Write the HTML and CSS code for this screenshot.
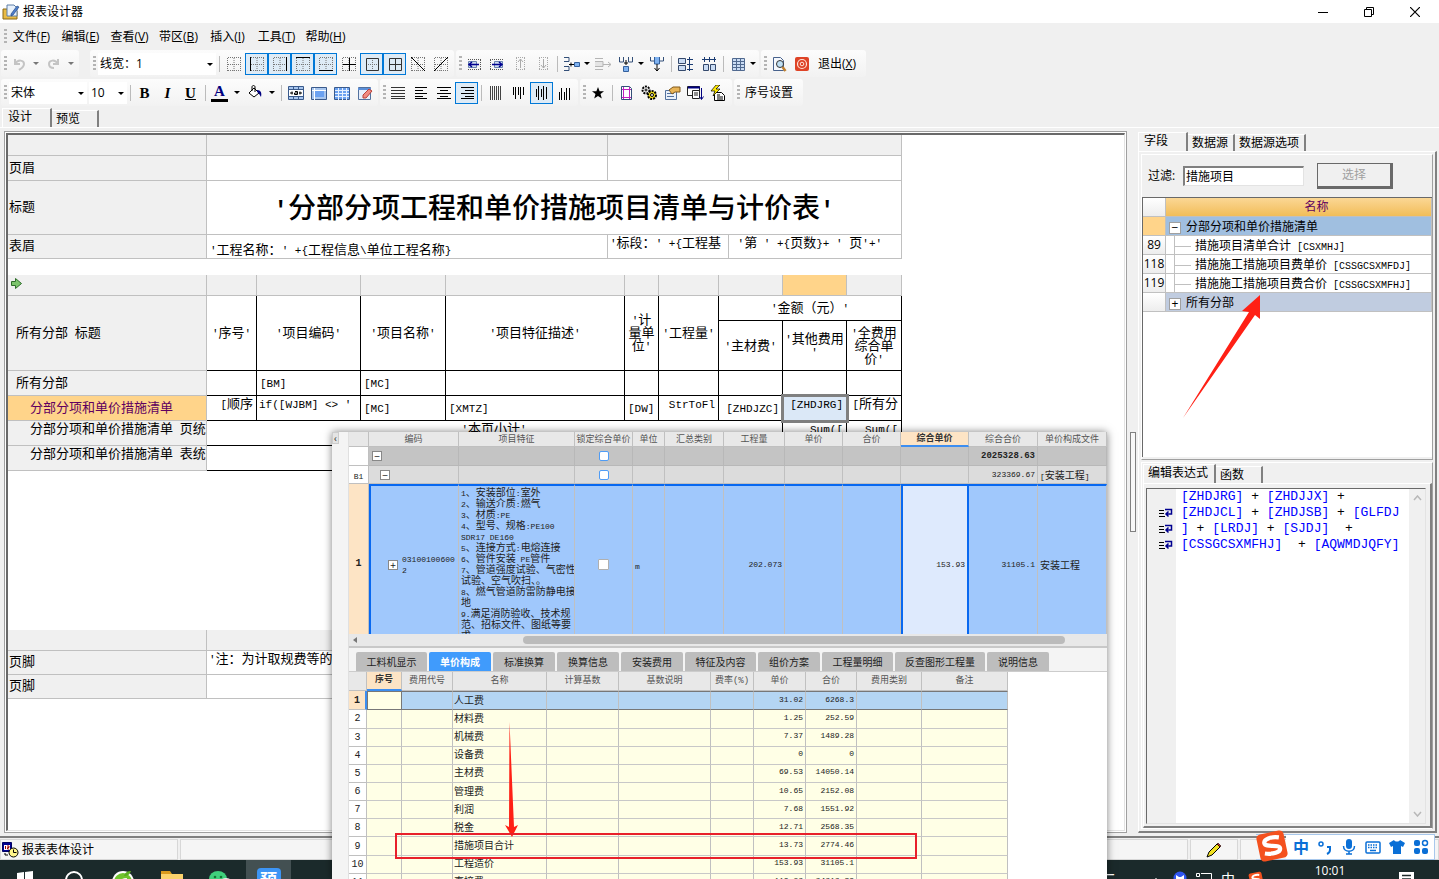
FILE: index.html
```html
<!DOCTYPE html>
<html lang="zh-CN">
<head>
    <meta charset="UTF-8">
    <meta name="viewport" content="width=device-width, initial-scale=1.0">
    <title>报表设计器</title>
    <link rel="stylesheet" href="styles.css">
</head>
<body>

<svg class="defs" width="0" height="0">
    <defs>
        <symbol id="dots" viewBox="0 0 16 16"><path d="M1.5 2v13M14.5 2v13M8 2v13M2 1.5h13M2 14.5h13M2 8.5h13" stroke="#777" stroke-dasharray="1 1" fill="none"/></symbol>
        <symbol id="wrap" viewBox="0 0 14 10"><path d="M0 2.500h5M0 5.500h5M0 8.500h6" stroke="#000"/><path d="M6 1.500h6.500v4.500h-5M9.500 3.500L7 6l2.500 2.500" stroke="#000090" stroke-width="1.500" fill="none"/></symbol>
        <symbol id="sogou" viewBox="0 0 32 32"><g transform="rotate(-12 16 16)"><rect x="3" y="3" width="26" height="26" rx="4" fill="#f4511e"/><path d="M24 9.500C17 7 9.500 8 9.500 12c0 4.500 13.500 3.500 13.500 7.500 0 4-8 4.500-15 2" stroke="#fff" stroke-width="4" fill="none"/></g></symbol>
    </defs>
</svg>

<div class="titlebar">
    <svg width="18" height="16" viewBox="0 0 18 16"><path d="M1 5h4l1 2h9v8H1z" fill="#e9bb45" stroke="#8a6914"/><path d="M5 1h7l3 3v8H5z" fill="#e8f1fb" stroke="#5c7ea8"/><path d="M9 10l6-8 2 1-6 8-2 1z" fill="#4d7fd0" stroke="#27497f" stroke-width=".7"/></svg>
    <span class="title">报表设计器</span>
    <button class="win" aria-label="最小化"><svg width="10" height="10"><path d="M0 5.500h10" stroke="#000"/></svg></button>
    <button class="win" aria-label="还原"><svg width="10" height="10"><path d="M.5 2.500h7v7h-7zM2.500 2.500v-2h7v7h-2" stroke="#000" fill="none"/></svg></button>
    <button class="win" aria-label="关闭"><svg width="10" height="10"><path d="M0 0l10 10M10 0L0 10" stroke="#000" stroke-width="1.200"/></svg></button>
</div>

<nav class="menubar">
    <span class="grip"></span>
    <button>文件(<u>F</u>)</button>
    <button>编辑(<u>E</u>)</button>
    <button>查看(<u>V</u>)</button>
    <button>带区(<u>B</u>)</button>
    <button>插入(<u>I</u>)</button>
    <button>工具(<u>T</u>)</button>
    <button>帮助(<u>H</u>)</button>
</nav>

<div class="toolbar">
    <div class="group undo">
        <span class="grip"></span>
        <button class="tool"><svg width="16" height="16"><path d="M4 3v5h5M4 8c3-5 9-4 9 0 0 3-2 4-5 6" stroke="#c4c4c4" stroke-width="2" fill="none"/></svg></button>
        <button class="caret wide dim"></button>
        <button class="tool"><svg width="16" height="16"><path d="M12 3v5H7M12 8C9 3 3 4 3 8c0 3 2 4 5 4" stroke="#c4c4c4" stroke-width="2" fill="none"/></svg></button>
        <button class="caret wide dim"></button>
    </div>
    <div class="group">
        <span class="grip"></span>
        <span class="combo line-width"><select aria-label="线宽"><option>线宽：1</option></select></span>
        <span class="sep"></span>
        <button class="tool"><svg width="16" height="16"><use href="#dots"/></svg></button>
        <button class="tool on"><svg width="16" height="16"><use href="#dots"/><path d="M1.500 1v14" stroke="#000"/></svg></button>
        <button class="tool on"><svg width="16" height="16"><use href="#dots"/><path d="M14.500 1v14" stroke="#000"/></svg></button>
        <button class="tool on"><svg width="16" height="16"><use href="#dots"/><path d="M1 1.500h14" stroke="#000"/></svg></button>
        <button class="tool on"><svg width="16" height="16"><use href="#dots"/><path d="M1 14.500h14" stroke="#000"/></svg></button>
        <button class="tool"><svg width="16" height="16"><use href="#dots"/><path d="M8.500 2v13M2 8.500h13" stroke="#000"/></svg></button>
        <button class="tool on"><svg width="16" height="16"><path d="M8.500 4v10M4 8.500h10" stroke="#777" stroke-dasharray="1 1"/><path d="M2.500 2.500h12v12h-12z" stroke="#333" fill="none"/></svg></button>
        <button class="tool on"><svg width="16" height="16"><path d="M2.500 2.500h12v12h-12zM8.500 2v12M2 8.500h12" stroke="#333" fill="none"/></svg></button>
        <button class="tool"><svg width="16" height="16"><use href="#dots"/><path d="M1 1l14 14" stroke="#000"/></svg></button>
        <button class="tool"><svg width="16" height="16"><use href="#dots"/><path d="M15 1L1 15" stroke="#000"/></svg></button>
    </div>
    <div class="group">
        <span class="grip"></span>
        <button class="tool"><svg width="16" height="16"><path d="M2 3.500h13M2 13.500h13M14.500 4v9" stroke="#555" stroke-dasharray="1 1"/><path d="M2.500 5.500h8v6h-8z" fill="#cfdcf0" stroke="#6a84b0"/><path d="M3 8.500h10M6 6L3 8.500 6 11" stroke="#000090" stroke-width="1.500" fill="none"/></svg></button>
        <button class="tool"><svg width="16" height="16"><path d="M1 3.500h13M1 13.500h13M1.500 4v9" stroke="#555" stroke-dasharray="1 1"/><path d="M5.500 5.500h8v6h-8z" fill="#cfdcf0" stroke="#6a84b0"/><path d="M3 8.500h10M10 6l3 2.500-3 2.500" stroke="#000090" stroke-width="1.500" fill="none"/></svg></button>
        <button class="tool"><svg width="16" height="16"><path d="M4 1.500h9M4 13.500h9M4.500 2v12M12.500 2v12" stroke="#aaa" stroke-dasharray="1 1"/><path d="M8.500 3v9M6 6l2.500-3L11 6" stroke="#aaa" fill="none"/></svg></button>
        <button class="tool"><svg width="16" height="16"><path d="M4 1.500h9M4 13.500h9M4.500 2v12M12.500 2v12" stroke="#aaa" stroke-dasharray="1 1"/><path d="M8.500 3v9M6 9l2.500 3L11 9" stroke="#aaa" fill="none"/></svg></button>
        <span class="sep"></span>
        <button class="tool"><svg width="18" height="16"><path d="M1 1.500h5v4H1M1 10.500h5v4H1" stroke="#334f78" fill="none"/><path d="M6 8.500h5M8 6.500v4" stroke="#000"/><path d="M11.500 6.500h5v4h-5z" fill="#7fb2f0" stroke="#34609c"/></svg></button>
        <button class="caret"></button>
        <button class="tool"><svg width="18" height="16"><path d="M1 2.500h8M1 5.500h8v5H1M1 13.500h8" stroke="#b5b5b5" fill="#e4e4e4"/><path d="M9 8.500h8M14 6l3 2.500-3 2.500" stroke="#b5b5b5" fill="none"/></svg></button>
        <button class="tool"><svg width="16" height="16"><path d="M1.500 1v5h4V1M10.500 1v5h4V1" stroke="#334f78" fill="none"/><path d="M8 4v5M6 7h4" stroke="#000"/><path d="M5.500 10.500h5v5h-5z" fill="#7fb2f0" stroke="#34609c"/></svg></button>
        <button class="caret"></button>
        <button class="tool"><svg width="16" height="16"><path d="M1.500 1v4h4M14.500 1v4h-4" stroke="#334f78" fill="none"/><path d="M5.500 1v7h5V1" fill="#7fb2f0" stroke="#34609c"/><path d="M8 8v7M5.500 12L8 15l2.500-3" stroke="#000" fill="none"/></svg></button>
        <span class="sep"></span>
        <button class="tool"><svg width="18" height="16"><path d="M1.500 2.500h7v5h-7zM1.500 9.500h7v5h-7z" fill="#cadcf4" stroke="#34496c"/><path d="M12.500 1v14M10 3.500h6M10 8.500h6M10 13.500h6" stroke="#1b3c73"/></svg></button>
        <button class="tool"><svg width="16" height="16"><path d="M2.500 8.500h5v6h-5zM9.500 8.500h5v6h-5z" fill="#cadcf4" stroke="#34496c"/><path d="M1 3.500h14M3.500 1v5M8.500 1v5M13.500 1v5" stroke="#1b3c73"/></svg></button>
        <span class="sep"></span>
        <button class="tool"><svg width="16" height="16"><path d="M2.500 2.500h12v12h-12zM6.500 2v12M10.500 2v12M2 5.500h12M2 8.500h12M2 11.500h12" fill="#cadcf4" stroke="#50698f"/></svg></button>
        <button class="caret"></button>
    </div>
    <div class="group">
        <span class="grip"></span>
        <button class="tool"><svg width="16" height="16"><path d="M2.500 1.500h7l3 3v10h-10z" fill="#f5f8fd" stroke="#47618c"/><circle cx="9" cy="8" r="3.500" fill="#bfe0f5" stroke="#333"/><path d="M11.500 11l3 4" stroke="#c08030" stroke-width="2.500"/></svg></button>
        <button class="tool"><svg width="16" height="16"><rect x="1" y="1" width="14" height="14" rx="2" fill="#de4326"/><circle cx="8" cy="8" r="4.500" stroke="#ffe4da" fill="none" stroke-width="1.200"/><circle cx="8" cy="8" r="1.800" stroke="#ffe4da" fill="none"/></svg></button>
        <button class="text">退出(<u>X</u>)</button>
    </div>
</div>

<div class="toolbar">
    <div class="group">
        <span class="grip"></span>
        <span class="combo family"><select aria-label="字体"><option>宋体</option></select></span>
        <span class="combo size"><select aria-label="字号"><option>10</option></select></span>
        <span class="sep"></span>
        <button class="tool letter"><b>B</b></button>
        <button class="tool letter"><i>I</i></button>
        <button class="tool letter"><u>U</u></button>
        <span class="sep"></span>
        <button class="tool letter font-color">A</button>
        <button class="caret wide"></button>
        <button class="tool"><svg width="16" height="16"><path d="M2 8l5-5 5 5-5 4z" fill="#fff" stroke="#000"/><path d="M5 6V2c0-2 3-2 3 0v5" stroke="#000" fill="none"/><path d="M10 5c4 0 5 3 4 7-2-3-2-4-4-5z" fill="#000080"/></svg></button>
        <button class="caret wide"></button>
        <span class="sep"></span>
        <button class="tool"><svg width="16" height="16"><path d="M.5 1.500h15v13H.5zM.5 4.500h15M.5 11.500h15M5.500 1v3M10.500 1v3M5.500 12v3M10.500 12v3" fill="#a8c6ee" stroke="#3a5a8c"/><path d="M1 5h14v6H1z" fill="#fff"/><path d="M2 8h3M11 8h3M4 6.500v3M12 6.500v3M7 6.500h2.500v3H6.500v-1.500h3" stroke="#000" fill="none"/></svg></button>
        <button class="tool"><svg width="16" height="16"><path d="M.5 2.500h15v12H.5z" fill="#a8c6ee" stroke="#3a5a8c"/><path d="M1 5.500h14M3.500 3v12" stroke="#fff"/><path d="M4 6h9v6H4z" fill="#6ba1f0"/></svg></button>
        <button class="tool"><svg width="16" height="16"><path d="M.5 2.500h15v12H.5z" fill="#6ba1f0" stroke="#3a5a8c"/><path d="M1 5.500h14M1 8.500h14M1 11.500h14M4.500 3v12M8.500 3v12M12.500 3v12" stroke="#e8f2ff"/></svg></button>
        <button class="tool"><svg width="16" height="16"><path d="M1.500 2.500h12v12h-12z" fill="#e7eefa" stroke="#52719e"/><path d="M1 4h13" stroke="#5c8fd8" stroke-width="2"/><path d="M6 10l6-6 3 2-6 7H6z" fill="#f08a80" stroke="#b94038"/></svg></button>
    </div>
    <div class="group">
        <span class="grip"></span>
        <button class="tool"><svg width="16" height="16"><path d="M1 2.500h14M1 5.500h14M1 8.500h14M1 11.500h14M1 13.500h14" stroke="#333"/></svg></button>
        <button class="tool"><svg width="16" height="16"><path d="M2 2.500h12M2 5.500h8M2 8.500h12M2 11.500h8M2 13.500h12" stroke="#000"/></svg></button>
        <button class="tool"><svg width="16" height="16"><path d="M1 2.500h14M4 5.500h8M1 8.500h14M4 11.500h8M1 13.500h14" stroke="#000"/></svg></button>
        <button class="tool on"><svg width="16" height="16"><path d="M2 2.500h13M6 5.500h9M2 8.500h13M6 11.500h9M2 13.500h13" stroke="#000"/></svg></button>
        <span class="sep"></span>
        <button class="tool"><svg width="16" height="16"><path d="M2.500 1v14M4.500 1v14M6.500 1v14M8.500 1v14M10.500 1v14M12.500 1v14" stroke="#444"/></svg></button>
        <button class="tool"><svg width="16" height="16"><path d="M2.500 2v8M4.500 2v12M7.500 2v8M9.500 2v12M12.500 2v8" stroke="#000"/></svg></button>
        <button class="tool on"><svg width="16" height="16"><path d="M2.500 4v8M4.500 1v14M7.500 4v8M9.500 1v14M12.500 2v12" stroke="#000"/></svg></button>
        <button class="tool"><svg width="16" height="16"><path d="M2.500 7v8M4.500 3v12M7.500 7v8M9.500 3v12M12.500 3v12" stroke="#000"/></svg></button>
    </div>
    <div class="group">
        <span class="grip"></span>
        <button class="tool"><svg width="16" height="16"><path d="M8 2l1.600 4.300H14l-3.500 2.800 1.300 4.500L8 11l-3.800 2.600 1.300-4.500L2 6.300h4.400z" fill="#000"/></svg></button>
        <span class="sep"></span>
        <button class="tool"><svg width="16" height="16"><path d="M2.500 1.500h8l2 2v11h-10z" fill="#fff" stroke="#334f78"/><path d="M4.500 2v12M10.500 2v12M3 4.500h9M3 12.500h9" stroke="#c020c0" fill="none"/></svg></button>
        <button class="tool"><svg width="18" height="16"><circle cx="5" cy="5" r="3.500" fill="#eee" stroke="#000" stroke-width="2" stroke-dasharray="2 1"/><circle cx="5" cy="5" r="1" fill="#fff" stroke="#000"/><circle cx="11" cy="10" r="4" fill="#f3e11a" stroke="#000" stroke-width="2" stroke-dasharray="2 1"/><circle cx="11" cy="10" r="1.500" fill="#fff" stroke="#000"/></svg></button>
        <button class="tool"><svg width="17" height="16"><path d="M1.500 5.500h11v9h-11zM3 8.500h7M3 11.500h7" fill="#e9f0fa" stroke="#52719e"/><path d="M5 5l4-3h7v5h-5L8 9z" fill="#e8b457" stroke="#80591c"/></svg></button>
        <button class="tool"><svg width="17" height="16"><path d="M.5 1.500h12v9H.5z" fill="#fff" stroke="#222"/><path d="M1 2.500h12" stroke="#000080" stroke-width="2"/><path d="M5.500 5.500h7v8h-7zM7 8h4M7 10h4" fill="#fff" stroke="#222"/><path d="M14.500 3v11M12.500 11.500l2 3 2-3" stroke="#000080" fill="none"/></svg></button>
        <button class="tool"><svg width="17" height="16"><path d="M4.500 7.500h7l3 3v5h-10zM7 10h3M7 12h6M7 14h6" fill="#fff" stroke="#000"/><path d="M6 0L1 6h4L3 11l7-7H6l4-4z" fill="#ffe800" stroke="#000" stroke-width=".7"/></svg></button>
    </div>
    <div class="group">
        <span class="grip"></span>
        <button class="text">序号设置</button>
    </div>
</div>

<div class="tabs page-tabs" role="tablist">
    <button class="tab current" role="tab">设计</button>
    <button class="tab" role="tab">预览</button>
</div>

<div class="main">
    <div class="design">
        <div class="canvas">
            <table class="sheet">
                <colgroup><col class="c-label"><col class="c-401"><col class="c-121"><col class="c-173"></colgroup>
                <tr class="head"><th></th><td></td><td></td><td></td></tr>
                <tr class="h25"><th>页眉</th><td></td><td></td><td></td></tr>
                <tr class="h54"><th>标题</th><td colspan="3" class="report-title"><span class="quote">'</span>分部分项工程和单价措施项目清单与计价表<span class="quote">'</span></td></tr>
                <tr class="h24"><th>表眉</th>
                    <td class="low"><span class="en">'</span>工程名称：<span class="en">' +{</span>工程信息<span class="en">\</span>单位工程名称<span class="en">}</span></td>
                    <td class="high"><span class="en">'</span>标段：<span class="en">' +{</span>工程基</td>
                    <td class="high"><span class="en"> '</span>第<span class="en"> ' +{</span>页数<span class="en">}+ ' </span>页<span class="en">'+'</span></td></tr>
            </table>
            <table class="sheet body">
                <colgroup><col class="c-label"><col class="c-50"><col class="c-104"><col class="c-85"><col class="c-179"><col class="c-34"><col class="c-60"><col class="c-64"><col class="c-64"><col class="c-55"></colgroup>
                <tr class="head"><th><svg width="11" height="11" viewBox="0 0 11 11"><path d="M.5 3.500h4v-3l6 5-6 5v-3h-4z" fill="#7cc46c" stroke="#2f6c2a"/></svg></th><td></td><td></td><td></td><td></td><td></td><td></td><td></td><td class="picked"></td><td></td></tr>
                <tr class="h25 mid"><th rowspan="2" class="in1">所有分部<span class="en"> </span>标题</th>
                    <td rowspan="2"><span class="en">'</span>序号<span class="en">'</span></td>
                    <td rowspan="2"><span class="en">'</span>项目编码<span class="en">'</span></td>
                    <td rowspan="2"><span class="en">'</span>项目名称<span class="en">'</span></td>
                    <td rowspan="2"><span class="en">'</span>项目特征描述<span class="en">'</span></td>
                    <td rowspan="2"><span class="en">'</span>计<br>量单<br>位<span class="en">'</span></td>
                    <td rowspan="2"><span class="en">'</span>工程量<span class="en">'</span></td>
                    <td colspan="3"><span class="en">'</span>金额（元）<span class="en">'</span></td></tr>
                <tr class="h50 mid">
                    <td><span class="en">'</span>主材费<span class="en">'</span></td>
                    <td><span class="en">'</span>其他费用<br><span class="en">'</span></td>
                    <td><span class="en">'</span>全费用<br>综合单<br>价<span class="en">'</span></td></tr>
                <tr class="h25"><th class="in1">所有分部</th><td></td><td><span class="en">[BM]</span></td><td><span class="en">[MC]</span></td><td></td><td></td><td></td><td></td><td></td><td></td></tr>
                <tr class="h25"><th class="in2 picked">分部分项和单价措施清单</th>
                    <td class="high end"><span class="en">[</span>顺序</td>
                    <td class="high"><span class="en">if([WJBM] &lt;&gt; '</span></td>
                    <td><span class="en">[MC]</span></td>
                    <td><span class="en">[XMTZ]</span></td>
                    <td><span class="en">[DW]</span></td>
                    <td class="high end"><span class="en">StrToFl</span></td>
                    <td class="end"><span class="en">[ZHDJZC]</span></td>
                    <td class="high end cursor"><span class="en">[ZHDJRG]</span></td>
                    <td class="high end"><span class="en">[</span>所有分</td></tr>
                <tr class="h25"><th class="in2 high">分部分项和单价措施清单<span class="en"> </span>页统</th><td colspan="7" class="high center"><span class="en">'</span>本页小计<span class="en">'</span></td><td class="high end"><span class="en">Sum([</span></td><td class="high end"><span class="en">Sum([</span></td></tr>
                <tr class="h25"><th class="in2 high">分部分项和单价措施清单<span class="en"> </span>表统</th><td colspan="7"></td><td></td><td></td></tr>
            </table>
            <table class="sheet foot">
                <colgroup><col class="c-label"><col class="c-695"></colgroup>
                <tr class="head"><th></th><td></td></tr>
                <tr class="h24"><th>页脚</th><td class="high"><span class="en">'</span>注：为计取规费等的使用，可在表中增设其中</td></tr>
                <tr class="h24"><th>页脚</th><td></td></tr>
            </table>
        </div>
    </div>

    <div class="splitter"><span></span></div>

    <aside class="side">
        <div class="tabs" role="tablist">
            <button class="tab current" role="tab">字段</button>
            <button class="tab" role="tab">数据源</button>
            <button class="tab" role="tab">数据源选项</button>
        </div>
        <div class="side-page">
            <section class="fields">
                <form class="filter">
                    <label for="filter">过滤:</label>
                    <input type="text" id="filter" value="措施项目">
                    <button type="button" disabled>选择</button>
                </form>
                <div class="tree-box">
                    <table class="tree">
                        <tr class="tree-head"><th></th><th>名称</th></tr>
                        <tr class="node current"><th></th><td><span class="toggle">−</span>分部分项和单价措施清单</td></tr>
                        <tr><th>89</th><td class="leaf">措施项目清单合计<span class="en"> [CSXMHJ]</span></td></tr>
                        <tr><th>118</th><td class="leaf">措施施工措施项目费单价<span class="en"> [CSSGCSXMFDJ]</span></td></tr>
                        <tr><th>119</th><td class="leaf">措施施工措施项目费合价<span class="en"> [CSSGCSXMFHJ]</span></td></tr>
                        <tr class="node"><th></th><td><span class="toggle">+</span>所有分部</td></tr>
                    </table>
                </div>
            </section>
            <section class="expression">
                <div class="tabs" role="tablist">
                    <button class="tab current" role="tab">编辑表达式</button>
                    <button class="tab" role="tab">函数</button>
                </div>
                <div class="editor-page">
                    <div class="editor">
                        <div class="gutter">
                            <svg width="14" height="10"><use href="#wrap"/></svg>
                            <svg width="14" height="10"><use href="#wrap"/></svg>
                            <svg width="14" height="10"><use href="#wrap"/></svg>
                        </div>
                        <div class="code" contenteditable="true" role="textbox" aria-label="表达式" spellcheck="false">[ZHDJRG] <b>+</b> [ZHDJJX] <b>+</b>
[ZHDJCL] <b>+</b> [ZHDJSB] <b>+</b> [GLFDJ
] <b>+</b> [LRDJ] <b>+</b> [SJDJ]  <b>+</b>
[CSSGCSXMFHJ]  <b>+</b> [AQWMDJQFY]</div>
                        <div class="scroll">
                            <svg width="9" height="6"><path d="M1 5l3.500-4L8 5" stroke="#b8b8b8" stroke-width="1.500" fill="none"/></svg>
                            <svg width="9" height="6"><path d="M1 1l3.500 4L8 1" stroke="#b8b8b8" stroke-width="1.500" fill="none"/></svg>
                        </div>
                    </div>
                </div>
            </section>
        </div>
    </aside>
</div>

<div class="statusbar">
    <div class="state">
        <svg width="17" height="16"><path d="M.5.500h9v9h-9z" fill="#000090" stroke="#000060"/><path d="M2 3h6v5H2z" fill="#fff"/><path d="M3.500 4v3M5 4h2v1.500H5.500V7H7" stroke="#a00000" fill="none"/><circle cx="11.500" cy="10.500" r="4.500" fill="#fff58a" stroke="#000"/><path d="M11.500 7.500v3h3M3 11v2h3" stroke="#000" fill="none"/></svg>
        报表表体设计
    </div>
    <div class="blank"></div>
    <div class="edit"><svg width="16" height="16"><path d="M1 15l2-5 8-8 3 3-8 8z" fill="#f0e020" stroke="#000"/><path d="M11 2l1-1 3 3-1 1z" fill="#d03020" stroke="#000" stroke-width=".6"/></svg></div>
    <div class="rest"></div>
</div>

<div class="taskbar">
    <span class="app"><svg width="18" height="16"><path d="M1 3l7-1v7H1zM9 2l8-1v8H9zM1 10h7v6H1zM9 10h8v6H9z" fill="#fff"/></svg></span>
    <span class="app"><svg width="20" height="20"><circle cx="10" cy="10" r="8" stroke="#fff" stroke-width="2" fill="none"/></svg></span>
    <span class="app"><svg width="24" height="22"><circle cx="12" cy="12" r="11" fill="#fff"/><circle cx="12" cy="12" r="9" fill="#6fc32c"/><path d="M7 15c1-5 4-7 9-7-1 5-4 7-9 7z" fill="#fff"/><path d="M13 6c1-4 4-5 7-5-1 3-3 5-7 5z" fill="#5aad20"/></svg></span>
    <span class="app"><svg width="24" height="18"><path d="M1 1h9l2 3H1z" fill="#d99a1c"/><path d="M1 4h22v14H1z" fill="#fbd26b"/></svg></span>
    <span class="app"><svg width="26" height="20"><ellipse cx="10" cy="9" rx="9" ry="8" fill="#3fd07c"/><circle cx="7" cy="7" r="1.300" fill="#173"/><circle cx="13" cy="7" r="1.300" fill="#173"/><ellipse cx="18" cy="14" rx="7" ry="6" fill="#e8e8e8"/></svg></span>
    <span class="app open"><span class="tile">预</span></span>
    <span class="tray">
        <span class="slot first">二</span>
        <span class="slot"><svg width="10" height="6"><path d="M1 5l4-4 4 4" stroke="#fff" stroke-width="1.500" fill="none"/></svg></span>
        <span class="slot"><svg width="14" height="14"><circle cx="7" cy="7" r="6.500" fill="#2f55f0"/><path d="M3 4l3 2h2l3-2v5l-4 3-4-3z" fill="#fff"/></svg></span>
        <span class="slot"><svg width="16" height="12"><path d="M.5 1.500h3v3h-3zM5 1.500h10.500v9H2" stroke="#fff" fill="none"/></svg></span>
        <span class="slot">中</span>
        <span class="slot wide"><svg width="16" height="16"><use href="#sogou"/></svg></span>
        <span class="clock">10:01</span>
        <span class="note"><svg width="16" height="14"><path d="M0 0h15v14H0z" fill="#fff"/><path d="M3 3.500h9M3 7h9" stroke="#1d2a2b" stroke-width="1.500"/></svg></span>
    </span>
</div>

<!-- 计价清单浮层 -->
<div class="popup">
    <div class="strip"><button aria-label="收起">‹</button></div>
    <div class="panel">
        <div class="bill-box">
            <table class="bill">
                <colgroup><col class="p-20"><col class="p-90"><col class="p-116"><col class="p-58"><col class="p-32"><col class="p-59"><col class="p-61"><col class="p-58"><col class="p-58"><col class="p-68"><col class="p-69"><col class="p-69"></colgroup>
                <tr class="cols"><th></th><th>编码</th><th>项目特征</th><th>锁定综合单价</th><th>单位</th><th>汇总类别</th><th>工程量</th><th>单价</th><th>合价</th><th class="sorted">综合单价</th><th>综合合价</th><th>单价构成文件</th></tr>
                <tr class="total"><th></th><td><span class="box">−</span></td><td></td><td class="center"><input type="checkbox" class="blue" aria-label="锁定"></td><td></td><td></td><td></td><td></td><td></td><td></td><td class="num big">2025328.63</td><td></td></tr>
                <tr class="sub"><th><span class="en">B1</span></th><td><span class="box deep">−</span></td><td></td><td class="center"><input type="checkbox" class="blue" aria-label="锁定"></td><td></td><td></td><td></td><td></td><td></td><td></td><td class="num">323369.67</td><td><span class="en">[</span>安装工程<span class="en">]</span></td></tr>
                <tr class="item"><th>1</th>
                    <td><div class="code-cell"><span class="box">+</span><span class="en">03100100600<br>2</span></div></td>
                    <td class="feature"><div><span class="en">1</span>、安装部位<span class="en">:</span>室外<br><span class="en">2</span>、输送介质<span class="en">:</span>燃气<br><span class="en">3</span>、材质<span class="en">:PE</span><br><span class="en">4</span>、型号、规格<span class="en">:PE100</span><br><span class="en">SDR17 DE160</span><br><span class="en">5</span>、连接方式<span class="en">:</span>电熔连接<br><span class="en">6</span>、管件安装<span class="en"> PE</span>管件<br><span class="en">7</span>、管道强度试验、气密性<br>试验、空气吹扫、。<br><span class="en">8</span>、燃气管道防雷防静电接<br>地<br><span class="en">9.</span>满足消防验收、技术规<br>范、招标文件、图纸等要<br>求</div></td>
                    <td class="center"><input type="checkbox" aria-label="锁定"></td>
                    <td><span class="en">m</span></td><td></td>
                    <td class="num">202.073</td><td></td><td></td>
                    <td class="num focus">153.93</td>
                    <td class="num">31105.1</td>
                    <td>安装工程</td></tr>
            </table>
        </div>
        <div class="hscroll"><span class="left"></span><span class="thumb"></span></div>
        <div class="popup-tabs" role="tablist">
            <button class="w71" role="tab">工料机显示</button>
            <button class="current" role="tab">单价构成</button>
            <button role="tab">标准换算</button>
            <button role="tab">换算信息</button>
            <button role="tab">安装费用</button>
            <button class="w71" role="tab">特征及内容</button>
            <button role="tab">组价方案</button>
            <button class="w71" role="tab">工程量明细</button>
            <button class="w90" role="tab">反查图形工程量</button>
            <button role="tab">说明信息</button>
        </div>
        <table class="cost">
            <colgroup><col class="q-18"><col class="q-35"><col class="q-51"><col class="q-94"><col class="q-72"><col class="q-92"><col class="q-43"><col class="q-52"><col class="q-51"><col class="q-65"><col class="q-86"></colgroup>
            <tr class="cols"><th></th><th class="sorted">序号</th><th>费用代号</th><th>名称</th><th>计算基数</th><th>基数说明</th><th>费率(%)</th><th>单价</th><th>合价</th><th>费用类别</th><th>备注</th></tr>
            <tr class="current"><th>1</th><td></td><td></td><td>人工费</td><td></td><td></td><td></td><td class="num">31.02</td><td class="num">6268.3</td><td></td><td></td></tr>
            <tr><th>2</th><td></td><td></td><td>材料费</td><td></td><td></td><td></td><td class="num">1.25</td><td class="num">252.59</td><td></td><td></td></tr>
            <tr><th>3</th><td></td><td></td><td>机械费</td><td></td><td></td><td></td><td class="num">7.37</td><td class="num">1489.28</td><td></td><td></td></tr>
            <tr><th>4</th><td></td><td></td><td>设备费</td><td></td><td></td><td></td><td class="num">0</td><td class="num">0</td><td></td><td></td></tr>
            <tr><th>5</th><td></td><td></td><td>主材费</td><td></td><td></td><td></td><td class="num">69.53</td><td class="num">14050.14</td><td></td><td></td></tr>
            <tr><th>6</th><td></td><td></td><td>管理费</td><td></td><td></td><td></td><td class="num">10.65</td><td class="num">2152.08</td><td></td><td></td></tr>
            <tr><th>7</th><td></td><td></td><td>利润</td><td></td><td></td><td></td><td class="num">7.68</td><td class="num">1551.92</td><td></td><td></td></tr>
            <tr><th>8</th><td></td><td></td><td>税金</td><td></td><td></td><td></td><td class="num">12.71</td><td class="num">2568.35</td><td></td><td></td></tr>
            <tr><th>9</th><td></td><td></td><td>措施项目合计</td><td></td><td></td><td></td><td class="num">13.73</td><td class="num">2774.46</td><td></td><td></td></tr>
            <tr><th>10</th><td></td><td></td><td>工程造价</td><td></td><td></td><td></td><td class="num">153.93</td><td class="num">31105.1</td><td></td><td></td></tr>
            <tr><th>11</th><td></td><td></td><td>直接费</td><td></td><td></td><td></td><td class="num">119.82</td><td class="num">24212.39</td><td></td><td></td></tr>
        </table>
    </div>
    <svg class="mark" width="14" height="116" viewBox="0 0 14 116"><path d="M4.500 0L9 105l4-2-6 12-7-12 4 2z" fill="#ff2015"/></svg>
    <span class="frame"></span>
</div>

<svg class="arrow" width="80" height="124" viewBox="0 0 80 124"><path d="M0 123L66 17l-7-1L77 0v24l-5-4z" fill="#ff2015"/></svg>

<div class="ime">
    <svg class="ime-logo" width="34" height="34"><use href="#sogou"/></svg>
    <span>中</span>
    <svg width="16" height="16"><circle cx="4" cy="5" r="2" stroke="#0a6fd6" stroke-width="1.500" fill="none"/><path d="M10 8h3v3c0 2-1 3-3 4" stroke="#0a6fd6" stroke-width="2" fill="none"/></svg>
    <svg width="16" height="16"><rect x="5" y="0" width="6" height="10" rx="3" fill="#0a6fd6"/><path d="M2.500 7c0 7 11 7 11 0M8 12v3M5 15h6" stroke="#0a6fd6" stroke-width="1.500" fill="none"/></svg>
    <svg width="16" height="16"><rect x="1" y="3" width="14" height="11" rx="1" stroke="#0a6fd6" stroke-width="1.500" fill="none"/><path d="M3 6h10M3 8.500h10" stroke="#0a6fd6" stroke-width="1.500" stroke-dasharray="1.500 1"/><path d="M5 11.500h6" stroke="#0a6fd6" stroke-width="1.500"/></svg>
    <svg width="16" height="16"><path d="M5 1c1 2 5 2 6 0l5 3-2 4-2-1v8H4V7L2 8 0 4z" fill="#0a6fd6"/></svg>
    <svg width="16" height="16"><rect x="1" y="1" width="6" height="6" rx="2" fill="#0a6fd6"/><circle cx="12" cy="4" r="2.500" stroke="#0a6fd6" stroke-width="1.500" fill="none"/><rect x="1" y="9" width="6" height="6" rx="2" fill="#0a6fd6"/><rect x="9" y="9" width="6" height="6" rx="2" fill="#0a6fd6"/></svg>
</div>

</body>
</html>
```

FILE: styles.css
```css
* {
    box-sizing: border-box;
}

body {
    margin: 0;
    height: 100vh;
    display: flex;
    flex-direction: column;
    position: relative;
    overflow: hidden;
    background-color: #f0f0f0;
    color: #000;
    font-family: "Open Sans", "Noto Sans CJK SC", sans-serif;
    font-size: 12px;
    line-height: 16px;
}

button, input, select {
    font: inherit;
    color: inherit;
    margin: 0;
    padding: 0;
    border: none;
    border-radius: 0;
    background: none;
    white-space: nowrap;
}

table {
    border-collapse: separate;
    border-spacing: 0;
    table-layout: fixed;
}

th, td {
    padding: 0;
    font-weight: normal;
    text-align: left;
    white-space: nowrap;
    overflow: hidden;
}

.defs {
    position: absolute;
}

/* window title and menu */
.titlebar {
    flex: none;
    height: 23px;
    display: flex;
    align-items: center;
    background-color: #fff;
    padding-left: 2px;
}

.title {
    flex: 1;
    margin-left: 3px;
}

.win {
    width: 46px;
    height: 20px;
    display: flex;
    align-items: center;
    justify-content: center;
}

.win:last-child {
    margin-right: 1px;
}

.menubar {
    flex: none;
    height: 27px;
    display: flex;
    align-items: center;
    padding-left: 4px;
}

.menubar button {
    width: 49px;
}

.grip {
    flex: none;
    width: 3px;
    height: 15px;
    background: repeating-linear-gradient(#b4b4b4 0 2px, transparent 2px 4px);
}

/* toolbars */
.toolbar {
    flex: none;
    height: 29px;
    display: flex;
    align-items: flex-start;
    padding-left: 1px;
}

.group {
    height: 27px;
    display: flex;
    align-items: center;
    padding: 0 2px 0 3px;
    margin-right: 2px;
    border-radius: 3px;
    background: linear-gradient(#fcfcfc, #f2f2f2);
}

.group.undo {
    margin-right: 11px;
}

.tool {
    width: 23px;
    height: 22px;
    display: flex;
    flex: none;
    align-items: center;
    justify-content: center;
}

.tool.on {
    background-color: #deebf6;
    border: 1px solid #0078d7;
}

.tool svg {
    flex: none;
}

.letter {
    font-family: "Liberation Serif", serif;
    font-size: 15px;
    font-weight: bold;
}

.font-color {
    height: 18px;
    line-height: 14px;
    color: #000080;
    border-bottom: 3px solid #000;
    width: 17px;
    margin: 0 3px;
}

.caret {
    width: 8px;
    height: 22px;
    display: flex;
    align-items: center;
    justify-content: center;
}

.caret.wide {
    width: 12px;
}

.caret::before, .combo::after {
    content: "";
    border: 3px solid transparent;
    border-top-color: #000;
    border-bottom: none;
}

.caret.dim::before {
    border-top-color: #777;
}

.sep {
    width: 6px;
    height: 16px;
    border-left: 1px solid #bbb;
    margin-left: 3px;
    margin-right: -3px;
}

.combo {
    position: relative;
    height: 22px;
    margin-left: 2px;
    background-color: #fff;
}

.combo select {
    width: 100%;
    height: 22px;
    padding-left: 2px;
    appearance: none;
}

.combo::after {
    position: absolute;
    right: 3px;
    top: 10px;
    pointer-events: none;
}

.line-width {
    width: 118px;
}

.family {
    width: 78px;
}

.size {
    width: 38px;
}

.text {
    padding: 0 8px 0 5px;
}

/* tabs */
.tabs {
    flex: none;
    display: flex;
    align-items: flex-end;
    font-size: 12px;
}

.tab {
    height: 17px;
    padding: 0 5px 0 4px;
    text-align: left;
    border-top: 1px solid #fff;
    border-right: 2px solid #808080;
}

.tab.current {
    height: 19px;
    padding: 0 18px 3px 5px;
    border-left: 1px solid #fff;
}

.page-tabs {
    height: 19px;
    padding-left: 2px;
}

.page-tabs .tab + .tab {
    padding-right: 17px;
}

/* main area */
.main {
    flex: 1;
    min-height: 0;
    display: flex;
    border-top: 1px solid #fff;
    border-bottom: 2px solid #808080;
}

.design {
    flex: 1;
    min-width: 0;
    margin: 3px 0 3px 4px;
    padding: 1px;
    border: 1px solid #a0a0a0;
    background-color: #fff;
}

.canvas {
    height: 100%;
    overflow: hidden;
    border: 2px solid #696969;
    border-right: 1px solid #e3e3e3;
    border-bottom: 1px solid #e3e3e3;
    font-family: "Noto Sans CJK SC", sans-serif;
    font-size: 13px;
    line-height: 14px;
}

.en {
    font-family: "Liberation Mono", monospace;
    font-size: 11px;
    line-height: 8px;
    white-space: pre;
}

.sheet {
    width: 894px;
}

.sheet + .sheet {
    margin-top: 16px;
}

.sheet.foot {
    margin-top: 159px;
}

.sheet th, .sheet td {
    border-right: 1px solid #c0c0c0;
    border-bottom: 1px solid #c0c0c0;
}

.sheet th {
    padding: 0 0 3px 1px;
}

.sheet td {
    padding: 0 3px 3px;
}

.sheet th, .sheet .head td {
    background-color: #f0f0f0;
}

.sheet.body tr:not(.head) td {
    border-color: #000;
}

.sheet.foot .head td {
    border-right: none;
}

.sheet .head {
    height: 21px;
}

.sheet .h24 {
    height: 24px;
}

.sheet .h25 {
    height: 25px;
}

.sheet .h50 {
    height: 50px;
}

.sheet .h54 {
    height: 54px;
}

.body .head svg {
    display: block;
    margin-left: 2px;
}

.sheet .in1 {
    padding-left: 8px;
}

.sheet .in2 {
    padding-left: 22px;
}

.sheet .high {
    vertical-align: top;
    padding-left: 2px;
}

.sheet th.in2.high {
    padding-left: 22px;
}

.sheet .low {
    vertical-align: bottom;
    padding-bottom: 2px;
}

.sheet .end {
    text-align: right;
}

.sheet .center, .mid td {
    text-align: center;
}

.sheet .mid td {
    padding: 0 0 3px;
    line-height: 13px;
}

.sheet .report-title {
    padding: 2px 0 0;
    font-size: 28px;
    font-weight: 500;
    line-height: 40px;
    text-align: center;
}

.quote {
    font-family: "Liberation Mono", monospace;
    font-size: 24px;
    font-weight: bold;
}

.sheet .head .picked, .sheet .picked {
    background-color: #ffd48a;
}

.sheet th.picked {
    color: #600060;
}

.sheet .cursor {
    background-color: #dbe8f7;
    outline: 3px solid #808080;
    outline-offset: -1px;
}

.c-label { width: 199px; }
.c-401 { width: 401px; }
.c-121 { width: 121px; }
.c-173 { width: 173px; }
.c-50 { width: 50px; }
.c-104 { width: 104px; }
.c-85 { width: 85px; }
.c-179 { width: 179px; }
.c-34 { width: 34px; }
.c-60 { width: 60px; }
.c-64 { width: 64px; }
.c-55 { width: 55px; }
.c-695 { width: 695px; }

.splitter {
    flex: none;
    width: 11px;
    display: flex;
    align-items: center;
    justify-content: center;
}

.splitter span {
    width: 6px;
    height: 100px;
    border: 1px solid #808080;
    background-color: #f7f7f7;
}

/* right side */
.side {
    flex: none;
    width: 301px;
    padding: 4px 2px 3px 0;
    display: flex;
    flex-direction: column;
}

.side-page {
    flex: 1;
    min-height: 0;
    display: flex;
    flex-direction: column;
    gap: 2px;
    padding: 2px;
    border: 1px solid #fff;
    border-right: 2px solid #808080;
    border-bottom: 2px solid #808080;
}

.fields {
    flex: 5 1 0;
    min-height: 0;
    display: flex;
    flex-direction: column;
    border: 1px solid #fff;
    border-right-color: #a0a0a0;
    border-bottom-color: #a0a0a0;
}

.filter {
    flex: none;
    height: 42px;
    display: flex;
    align-items: center;
    padding-left: 6px;
}

.filter label {
    width: 35px;
}

.filter input {
    width: 121px;
    height: 20px;
    padding: 0 0 2px 1px;
    border: 1px solid #e3e3e3;
    border-top: 2px solid #808080;
    border-left: 2px solid #808080;
    background-color: #fff;
}

.filter button {
    width: 76px;
    height: 26px;
    margin-left: 13px;
    color: #a0a0a0;
    border: 1px solid #696969;
    border-right-width: 3px;
    border-bottom-width: 3px;
}

.tree-box {
    flex: 1;
    border-top: 1px solid #696969;
    border-left: 1px solid #696969;
    background-color: #fff;
    margin-bottom: 2px;
}

.tree {
    width: 100%;
}

.tree th, .tree td {
    height: 19px;
    border-right: 1px solid #c0c0c0;
    border-bottom: 1px solid #c0c0c0;
}

.tree th:first-child {
    width: 23px;
    text-align: center;
    background: linear-gradient(#fff, #ededed);
}

.tree .tree-head th:last-child {
    color: #600060;
    text-align: center;
    padding-left: 36px;
    background: linear-gradient(#fbd795, #f2bd58);
}

.tree td {
    padding-top: 2px;
}

.tree .node td {
    background-color: #c0cce0;
}

.tree .node.current td {
    background-color: #a0bfe0;
}

.tree .node.current th {
    background: #ffd48a;
}

.tree .en {
    font-size: 10px;
}

.toggle {
    display: inline-block;
    width: 12px;
    height: 12px;
    margin: 0 5px 0 3px;
    border: 1px solid #a0a0a0;
    background-color: #fff;
    text-align: center;
    line-height: 10px;
    vertical-align: -1px;
}

.tree .leaf {
    padding: 2px 0 0 29px;
    background: linear-gradient(#c0c0c0, #c0c0c0) 8px 0 / 1px 100% no-repeat,
        linear-gradient(#c0c0c0, #c0c0c0) 8px 10px / 17px 1px no-repeat;
}

.expression {
    flex: 6 1 0;
    min-height: 0;
    display: flex;
    flex-direction: column;
    padding: 1px 0 0 1px;
    border: 1px solid #fff;
    border-right-color: #a0a0a0;
}

.expression .tab.current {
    padding: 0 6px 3px 4px;
}

.expression .tab + .tab {
    padding-right: 17px;
}

.editor-page {
    flex: 1;
    min-height: 0;
    padding: 4px 4px 2px 2px;
    border: 1px solid #fff;
    border-right: 2px solid #808080;
    border-bottom: 2px solid #808080;
}

.editor {
    height: 100%;
    display: flex;
    border: 1px solid #e3e3e3;
    border-top-color: #696969;
    border-left-color: #696969;
    background-color: #fff;
}

.gutter {
    width: 29px;
    padding: 19px 0 0 12px;
    display: flex;
    flex-direction: column;
    gap: 6px;
    background-color: #f0f0f0;
}

.code {
    flex: 1;
    padding-left: 5px;
    font-family: "Liberation Mono", monospace;
    font-size: 13px;
    line-height: 16px;
    white-space: pre;
    color: #0000ff;
}

.code b {
    font-weight: normal;
    color: #000;
}

.scroll {
    width: 16px;
    padding: 6px 0;
    display: flex;
    flex-direction: column;
    justify-content: space-between;
    align-items: center;
    background-color: #f0f0f0;
}

/* status bar */
.statusbar {
    flex: none;
    height: 22px;
    display: flex;
    gap: 2px;
    padding-top: 1px;
}

.statusbar div {
    display: flex;
    align-items: center;
    border: 1px solid #d7d7d7;
    background-color: #f5f5f5;
}

.state {
    width: 178px;
    padding-left: 1px;
    gap: 3px;
}

.blank {
    flex: 1;
}

.edit {
    width: 48px;
    justify-content: center;
}

.rest {
    width: 199px;
}

/* taskbar */
.taskbar {
    flex: none;
    height: 19px;
    display: flex;
    overflow: hidden;
    background-color: #1b2a2b;
    color: #fff;
}

.app {
    width: 49px;
    height: 40px;
    padding-top: 10px;
    text-align: center;
}

.app.open {
    width: 45px;
    margin-left: 1px;
    padding-top: 8px;
    background-color: #435052;
}

.tile {
    display: block;
    width: 24px;
    height: 24px;
    margin: 0 auto;
    border-radius: 4px;
    background-color: #3d95f5;
    font-size: 17px;
    font-weight: bold;
    line-height: 24px;
}

.tray {
    height: 40px;
    margin-left: auto;
    display: flex;
}

.slot {
    width: 24px;
    padding-top: 11px;
    text-align: center;
    font-size: 14px;
}

.slot.first {
    width: 42px;
    text-align: left;
}

.slot.wide {
    width: 32px;
}

.clock {
    width: 127px;
    padding: 3px 11px 0 0;
    text-align: center;
}

.note {
    width: 40px;
    padding-top: 12px;
}

/* overlay with the bill of quantities */
.popup {
    position: absolute;
    left: 332px;
    top: 432px;
    bottom: 0;
    width: 775px;
    display: flex;
    overflow: hidden;
    background-color: #fff;
    box-shadow: 0 0 8px rgba(0, 0, 0, 0.5);
    font-family: "Noto Sans CJK SC", sans-serif;
    font-size: 10px;
    line-height: 11px;
    color: #222;
}

.popup .en, .popup .num {
    font-family: "Liberation Mono", monospace;
    font-size: 8px;
}

.popup .en {
    line-height: 4px;
}

.strip {
    width: 17px;
    background-color: #f4f4f4;
    border-right: 1px solid #e0e0e0;
}

.strip button {
    display: block;
    width: 7px;
    height: 12px;
    border: 1px solid #ccc;
    background-color: #e4e4e4;
    line-height: 8px;
}

.panel {
    flex: 1;
    min-width: 0;
}

.bill-box {
    height: 202px;
    overflow: hidden;
}

.bill {
    width: 758px;
}

.bill th, .bill td, .cost th, .cost td {
    border-right: 1px solid #c0c0c0;
    border-bottom: 1px solid #c0c0c0;
    padding: 0 2px;
}

.popup .cols th {
    text-align: center;
    font-size: 9px;
    color: #555;
    background-color: #e8e8e8;
    padding: 0;
}

.popup .cols .sorted {
    font-weight: bold;
    color: #333;
    background-color: #fde4c5;
    border-bottom: 2px solid #3d8ef0;
}

.bill .cols {
    height: 15px;
}

.bill .cols th {
    padding-bottom: 2px;
}

.bill .total {
    height: 19px;
}

.bill .total td {
    background-color: #c4c4c4;
    border-color: #b8b8b8;
}

.bill .sub {
    height: 18px;
}

.bill .sub td {
    background-color: #dcdcdc;
}

.bill tr:not(.cols) th {
    padding: 0;
    text-align: center;
    background-color: #fff;
}

.bill .item {
    height: 160px;
}

.bill tr.item th {
    background-color: #fde4c5;
    font-family: "Liberation Mono", monospace;
    font-weight: bold;
}

.bill .item td {
    background-color: #a0c8fc;
    border-top: 2px solid #0868f0;
}

.bill .item td:nth-child(2) {
    border-left: 2px solid #0868f0;
}

.bill .item .focus {
    background-color: #deeafd;
    border-left: 2px solid #0868f0;
    border-right: 2px solid #0868f0;
}

.popup .num {
    text-align: right;
}

.popup .big {
    font-size: 9px;
    font-weight: bold;
}

.popup .center {
    text-align: center;
}

.popup input {
    appearance: none;
    display: block;
    width: 11px;
    height: 11px;
    margin: 0 auto;
    border: 1px solid #b0b0b0;
    background-color: #fff;
    border-radius: 1px;
}

.popup input.blue {
    width: 10px;
    height: 10px;
    border-color: #4f9cf5;
    border-radius: 2px;
}

.box {
    display: block;
    width: 10px;
    height: 10px;
    margin-left: 1px;
    border: 1px solid #888;
    background-color: #fff;
    text-align: center;
    line-height: 7px;
}

.box.deep {
    margin-left: 9px;
}

.code-cell {
    display: flex;
    align-items: center;
    gap: 4px;
    margin-left: 14px;
}

.popup .code-cell .en {
    line-height: 11px;
}

.feature div {
    height: 157px;
}

.hscroll {
    height: 14px;
    display: flex;
    align-items: center;
    border-bottom: 2px solid #c8c8c8;
    background-color: #e8e8e8;
}

.hscroll .left {
    margin: 0 166px 0 4px;
    border: 3px solid transparent;
    border-left: none;
    border-right: 4px solid #777;
}

.hscroll .thumb {
    width: 542px;
    height: 8px;
    border-radius: 4px;
    background-color: #bbb;
}

.popup-tabs {
    height: 24px;
    display: flex;
    align-items: center;
    gap: 2px;
    padding: 3px 0 0 7px;
    background-color: #f4f4f4;
    border-bottom: 1px solid #ccc;
}

.popup-tabs button {
    width: 62px;
    height: 19px;
    background-color: #bdbdbd;
    border-radius: 2px 2px 0 0;
}

.popup-tabs .current {
    color: #fff;
    font-weight: bold;
    background-color: #409bfc;
}

.popup-tabs .w71 {
    width: 71px;
}

.popup-tabs .w90 {
    width: 90px;
}

.cost {
    width: 659px;
    height: 220px;
}

.cost .cols {
    height: 19px;
}

.cost th {
    background-color: #fff;
    text-align: center;
    font-family: "Liberation Mono", "Noto Sans CJK SC", monospace;
}

.cost td {
    background-color: #ffffe6;
    border-bottom-color: #c8c8c8;
}

.cost tr:not(.cols) th {
    padding: 0;
}

.cost tr:not(.cols) td {
    padding: 0 2px 3px 1px;
}

.cost .current th {
    background-color: #fde4c5;
    border-right: 2px solid #3d8ef0;
    font-weight: bold;
}

.cost .current td {
    background-color: #b4d5f3;
    border-top: 1px solid #777;
    border-bottom-color: #777;
}

.cost .current td:nth-child(2) {
    background-color: #ffffe6;
    border: 1px solid #777;
}

.p-20 { width: 20px; }
.p-90 { width: 90px; }
.p-116 { width: 116px; }
.p-58 { width: 58px; }
.p-32 { width: 32px; }
.p-59 { width: 59px; }
.p-61 { width: 61px; }
.p-68 { width: 68px; }
.p-69 { width: 69px; }
.q-18 { width: 18px; }
.q-35 { width: 35px; }
.q-51 { width: 51px; }
.q-94 { width: 94px; }
.q-72 { width: 72px; }
.q-92 { width: 92px; }
.q-43 { width: 43px; }
.q-52 { width: 52px; }
.q-65 { width: 65px; }
.q-86 { width: 86px; }

/* red marks */
.mark {
    position: absolute;
    left: 173px;
    top: 290px;
}

.frame {
    position: absolute;
    left: 63px;
    top: 401px;
    width: 522px;
    height: 26px;
    border: 2px solid #e8202a;
}

.arrow {
    position: absolute;
    left: 1183px;
    top: 295px;
}

/* input method bar */
.ime {
    position: absolute;
    right: 4px;
    bottom: 19px;
    height: 26px;
    display: flex;
    align-items: center;
    gap: 8px;
    padding: 0 5px 0 37px;
    border: 1px solid #a8c8ec;
    border-left: none;
    background: linear-gradient(#fff, #fff) right / 148px 100% no-repeat;
    color: #0a6fd6;
    font-size: 16px;
    font-weight: bold;
}

.ime-logo {
    position: absolute;
    left: -1px;
    top: -6px;
}
```
